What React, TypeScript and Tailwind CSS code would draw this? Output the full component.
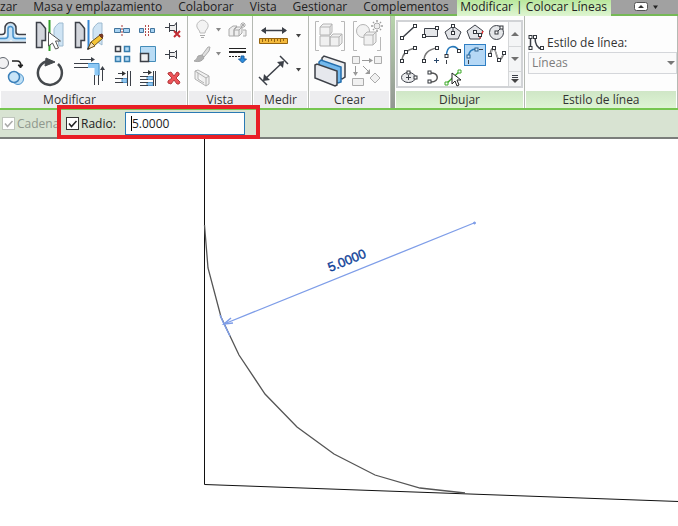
import type { ReactNode } from 'react';

interface IconProps {
  w: number;
  h: number;
  children: ReactNode;
}

function Icon({ w, h, children }: IconProps) {
  return (
    <svg width={w} height={h} viewBox={`0 0 ${w} ${h}`} fill="none" stroke="#3c4048" aria-hidden="true" className="block">
      {children}
    </svg>
  );
}

interface ToolProps {
  label: string;
  children: ReactNode;
  active?: boolean;
}

function Tool({ label, children, active }: ToolProps) {
  return (
    <button
      type="button"
      title={label}
      aria-label={label}
      className={active ? 'block bg-[#b5d8f6] outline outline-[#2f7fc4] -outline-offset-1' : 'block hover:bg-sky-50'}
    >
      {children}
    </button>
  );
}

function DropArrow({ label, faded }: { label: string; faded?: boolean }) {
  return (
    <button type="button" aria-label={label} className="flex items-center justify-center">
      <Icon w={8} h={6}>
        <path d="M2 1h5L4.500 4.500z" fill={faded ? '#888' : '#444'} stroke="none" />
      </Icon>
    </button>
  );
}

interface PanelProps {
  title: string;
  children: ReactNode;
  green?: boolean;
  grow?: boolean;
  titleClass?: string;
}

function Panel({ title, children, green, grow, titleClass = '' }: PanelProps) {
  return (
    <section className={`flex flex-col border-r border-[#b5b9b3] ${grow ? 'min-w-0 flex-1' : 'shrink-0'}`}>
      <div className="h-[75px] bg-[#fdfdfd]">{children}</div>
      <h2
        className={`h-[17px] border-x border-white text-center leading-[17px] ${titleClass} ${
          green ? 'bg-linear-to-b from-[#cfe6c6] to-[#def4d4]' : 'bg-[#ededef]'
        }`}
      >
        {title}
      </h2>
    </section>
  );
}

/* square grips at the ends of sketch lines */
function Grips({ at }: { at: number[][] }) {
  return (
    <>
      {at.map(([x, y]) => (
        <rect key={`${x}-${y}`} x={x - 1.5} y={y - 1.5} width="3" height="3" fill="#fff" stroke="#33373d" />
      ))}
    </>
  );
}

const cursor = 'M0 0v11l3-3 2 5 2-1-2-5h4z';

function ModifyPanel() {
  return (
    <Panel title="Modificar" titleClass="pr-12">
      <div className="flex w-[187px] gap-[3px]">
        <div className="grid grid-cols-[26px_32px_32px] grid-rows-[34px_34px] gap-x-2 pt-[3px]">
          <Tool label="Desfase">
            <Icon w={26} h={34}>
              <path d="M0 20h7q2 0 2-2V9q0-2 2-2t2 2v9q0 2 2 2h11" stroke="#c9e3f6" strokeWidth="5" />
              <path d="M0 15.500h2q3 0 3-3V9a5.500 5.500 0 0 1 11 0v4q0 2.500 3 2.500h7" strokeWidth="1.500" />
              <path d="M0 19.500h5q3 0 3-3V10a2.500 2.500 0 0 1 5 0v6.500q0 3 3 3h10" stroke="#4690c9" strokeWidth="1.500" />
              <path d="M0 23.500h26" strokeWidth="1.500" />
            </Icon>
          </Tool>
          <Tool label="Simetría, seleccionar eje">
            <Icon w={32} h={34}>
              <path d="M2.500 3.500h4q3 3 5 6v12H8v7H2.500z" fill="#d3d6dc" strokeWidth="1.500" />
              <path d="M29 4h-4q-4 3-5 6v10h4l1 7h4z" fill="#cfe4f4" stroke="#9dbad0" />
              <path d="M15.500 1v31" stroke="#35a12c" strokeWidth="2" />
              <path d="M14.500 13v14l4-3 3 6 3-1-3-7h5z" fill="#fff" stroke="#555" />
            </Icon>
          </Tool>
          <Tool label="Simetría, dibujar eje">
            <Icon w={32} h={34}>
              <path d="M1.500 3.500h4q3 3 5 6v12H7v7H1.500z" fill="#d3d6dc" strokeWidth="1.500" />
              <path d="M28 4h-4q-4 3-5 6v10l9 6z" fill="#cfe4f4" stroke="#9dbad0" />
              <path d="M14.500 1v29" stroke="#3687d3" strokeWidth="2" />
              <path d="M14 30l3-7 9-7 3 3-9 8z" fill="#f5c535" stroke="#73551f" />
              <path d="M25 16l3-1 1 2-1 2z" fill="#7c3b24" stroke="#6a301c" />
              <path d="M17 23l4 4-7 3z" fill="#f5dfb4" stroke="#73551f" />
              <path d="M13 31l1-3 2 2z" fill="#333" stroke="none" />
            </Icon>
          </Tool>
          <Tool label="Copiar">
            <Icon w={26} h={34}>
              <circle cx="3" cy="10" r="5.500" fill="#f1f1f3" stroke="#60656d" />
              <path d="M12 8h5q4 0 4 5" stroke="#222" strokeWidth="1.500" />
              <path d="M18 12h5l-2.500 3z" fill="#222" stroke="#222" />
              <circle cx="18" cy="26" r="5.500" fill="#bedff5" stroke="#4d93cb" />
              <circle cx="14" cy="24" r="5.500" fill="#c9e5f8" stroke="#3b80ba" strokeWidth="1.500" />
            </Icon>
          </Tool>
          <Tool label="Rotar">
            <Icon w={32} h={34}>
              <path d="M12 8.500A12 12 0 1 0 24 11" stroke="#45494d" strokeWidth="2.500" />
              <path d="M12 5l9 4-10 4z" fill="#45494d" stroke="#45494d" />
            </Icon>
          </Tool>
          <Tool label="Recortar o alargar en esquina">
            <Icon w={32} h={34}>
              <path d="M14 12.500h8q1 0 1 1v9" stroke="#8ec9f5" strokeWidth="5" />
              <path d="M14 10.500h11v12" stroke="#4a92ca" />
              <path d="M0 10.500h14M0 14.500h14M20.500 22v10M24.500 22v10" />
              <path d="M6 6.500h12M28.500 28V16" />
              <path d="M17 4l4 2.500L17 9zM26 17l2.500-4 2.500 4z" fill="#3c4048" stroke="none" />
            </Icon>
          </Tool>
        </div>
        <div className="grid grid-cols-[26px_26px_26px] grid-rows-[24px_24px_24px] pt-[2px]">
          <Tool label="Dividir elemento">
            <Icon w={26} h={24}>
              <path d="M5.500 10.500h6v4h-6zM14.500 10.500h6v4h-6z" fill="#a7d2f2" stroke="#42759d" />
              <path d="M13 7v11" stroke="#a43838" strokeDasharray="2 1" />
            </Icon>
          </Tool>
          <Tool label="Dividir con separación">
            <Icon w={26} h={24}>
              <path d="M4.500 10.500h4v4h-4zM15.500 10.500h4v4h-4z" fill="#a7d2f2" stroke="#42759d" />
              <path d="M10.500 7v11M13.500 7v11" stroke="#b34a4a" strokeDasharray="2 1" />
            </Icon>
          </Tool>
          <Tool label="Desbloquear">
            <Icon w={26} h={24}>
              <path d="M4 9.500h4M8.500 5v9M8.500 7.500h5l2-3v11l-2-3h-5" fill="#eee" />
              <path d="M13 13l6 6m0-6l-6 6" stroke="#c22c33" strokeWidth="2" />
            </Icon>
          </Tool>
          <Tool label="Matriz">
            <Icon w={26} h={24}>
              <path d="M6.500 4.500h5v5h-5z" fill="#f2f2f2" strokeWidth="1.500" />
              <path d="M15.500 4.500h5v5h-5zM6.500 14.500h5v5h-5zM15.500 14.500h5v5h-5z" fill="#b5daf5" stroke="#397fae" strokeWidth="1.500" />
            </Icon>
          </Tool>
          <Tool label="Escala">
            <Icon w={26} h={24}>
              <path d="M5.500 4.500h15v15h-15z" fill="#b9dcf5" stroke="#448cb9" />
              <path d="M5.500 11.500h8v8h-8z" fill="#f0f0f1" strokeWidth="1.500" />
            </Icon>
          </Tool>
          <Tool label="Bloquear">
            <Icon w={26} h={24}>
              <path d="M4 12.500h4M8.500 8v9M8.500 10.500h5l2-2v8l-2-2h-5" fill="#eee" />
            </Icon>
          </Tool>
          <Tool label="Alargar un elemento">
            <Icon w={26} h={24}>
              <path d="M13 12.500h5v4h-5z" fill="#91c7ef" stroke="#5798cc" />
              <path d="M6 12.500h8M6 16.500h8M18.500 5v15M21.500 5v15M9 7.500h7" />
              <path d="M13 5l4 2.500-4 2.500z" fill="#333" stroke="none" />
            </Icon>
          </Tool>
          <Tool label="Alargar varios elementos">
            <Icon w={26} h={24}>
              <path d="M12 10.500h6v3h-6zM12 16.500h6v3h-6z" fill="#91c7ef" stroke="#5798cc" />
              <path d="M5 10.500h8M5 13.500h8M5 16.500h8M5 19.500h8M18.500 5v15M20.500 5v15M8 6.500h7" />
              <path d="M13 4l4 2.500L13 9z" fill="#333" stroke="none" />
            </Icon>
          </Tool>
          <Tool label="Borrar">
            <Icon w={26} h={24}>
              <path d="M7 7l3-1 3 4 3-4 2 1v2l-3 3 4 4-1 2h-2l-3-4-3 4-3-1v-2l4-3-4-4z" fill="#ed5358" stroke="#b33a3d" />
            </Icon>
          </Tool>
        </div>
      </div>
    </Panel>
  );
}

function ViewPanel() {
  return (
    <Panel title="Vista">
      <div className="grid w-[64px] grid-cols-[24px_8px_28px] grid-rows-[24px_24px_24px] justify-items-end pl-[2px] pt-[2px]">
        <Tool label="Ocultar en vista">
          <Icon w={24} h={24}>
            <path d="M10 15q0-2-2-4a5.500 5.500 0 1 1 9 0q-2 2-2 4z" fill="#f3f3f3" stroke="#bcbcbc" />
            <path d="M10 17.500h5M11 19.500h3" stroke="#aaa" />
          </Icon>
        </Tool>
        <DropArrow label="Opciones de ocultar" faded />
        <Tool label="Caja de selección">
          <Icon w={24} h={24}>
            <path d="M3 11l4-3h4l-3 3v7H3zM8 12l3-3h5v6l-3 3H8zM8 12h5v6M13 12l3-3M17 12h3v6h-3" fill="#eee" stroke="#aaa" />
            <path d="M14 7h6M17 4v6M15 5l4 4M19 5l-4 4" stroke="#aaa" />
          </Icon>
        </Tool>
        <Tool label="Modificar gráficos">
          <Icon w={24} h={24}>
            <path d="M4 19q3-1 4-5l4-1 2 3q-3 5-10 3z" fill="#b2b2b2" stroke="#a5a5a5" />
            <path d="M12 13l6-8h2l-1 4-5 6z" fill="#e0e0e0" stroke="#aaa" />
          </Icon>
        </Tool>
        <DropArrow label="Opciones de gráficos" faded />
        <Tool label="Estilo de línea de trabajo">
          <Icon w={24} h={24}>
            <path d="M3 6.500h17" stroke="#222" />
            <path d="M3 10h17" stroke="#222" strokeWidth="2" />
            <path d="M3 14.500h13" stroke="#222" strokeDasharray="2 1" />
            <path d="M15 14h3v3h2.500l-4 4-4-4H15z" fill="#2c8ddd" stroke="#1b5d9e" />
          </Icon>
        </Tool>
        <Tool label="Sección">
          <Icon w={24} h={24}>
            <path d="M5 5l3-1 11 6v8l-3 2-11-7zM5 5l11 7v8M16 12l3-2M8 7v6l6 4" fill="#f1f1f1" stroke="#b0b0b0" />
          </Icon>
        </Tool>
      </div>
    </Panel>
  );
}

function MeasurePanel() {
  return (
    <Panel title="Medir">
      <div className="grid w-[55px] grid-cols-[32px_8px] grid-rows-[34px_34px] gap-x-[5px] pl-1 pt-[3px]">
        <Tool label="Medir distancia">
          <Icon w={32} h={34}>
            <path d="M5 11.500h24" strokeWidth="1.500" />
            <path d="M9 8v7l-5-3.500zM25 8v7l5-3.500z" fill="#3c4048" stroke="none" />
            <path d="M2.500 19.500h28v5h-28z" fill="#f3b93c" stroke="#96640f" />
            <path d="M5.500 20v3M8.500 20v2M11.500 20v3M14.500 20v2M17.500 20v3M20.500 20v2M23.500 20v3M26.500 20v2" stroke="#96640f" />
          </Icon>
        </Tool>
        <DropArrow label="Opciones de distancia" />
        <Tool label="Cota alineada">
          <Icon w={32} h={34}>
            <path d="M7 27L26 9" strokeWidth="1.500" />
            <path d="M6 28l1-7 6 6zM27 8l-7 1 6 6z" fill="#3c4048" stroke="none" />
            <path d="M2 24l8 8M23 3l8 8" strokeWidth="1.500" />
          </Icon>
        </Tool>
        <DropArrow label="Opciones de cota" />
      </div>
    </Panel>
  );
}

function CreatePanel() {
  return (
    <Panel title="Crear">
      <div className="grid w-[81px] grid-cols-[34px_34px] grid-rows-[34px_34px] gap-x-1 pl-[5px] pt-[3px]">
        <Tool label="Crear grupo">
          <Icon w={34} h={34}>
            <path d="M5 2.500H1.500v29H5M27 2.500h3.500v29H27" stroke="#b8b8b8" />
            <path d="M6 8l3-3h9v8l-2 3H6zM6 8h10v8M16 8l2-3" fill="#f2f2f2" stroke="#b4b4b4" />
            <path d="M6 17h10v10H6zM16 18l3-3h9v9l-3 3h-9zM16 18h9v9M25 18l3-3" fill="#f0f0f0" stroke="#b4b4b4" />
          </Icon>
        </Tool>
        <Tool label="Crear similar">
          <Icon w={34} h={34}>
            <path d="M5 2.500H1.500v29H5M25 31.500h3.500V18" stroke="#b8b8b8" />
            <circle cx="11" cy="12" r="6.500" fill="#f2f2f2" stroke="#b4b4b4" />
            <path d="M12 16l3-3h9v10l-3 3h-9zM12 16h9v10M21 16l3-3" fill="#f0f0f0" stroke="#b4b4b4" />
            <circle cx="25" cy="7" r="3" fill="#eee" stroke="#a8a8a8" />
            <path d="M25 1v2M25 11v2M19 7h2M29 7h2M21 3l1 1M28 10l1 1M29 3l-1 1M22 10l-1 1" stroke="#a0a0a0" strokeWidth="1.500" />
          </Icon>
        </Tool>
        <Tool label="Crear montaje">
          <Icon w={34} h={34}>
            <path d="M8 5l2-2 21 7v14l-3 2-20-8z" fill="#eceef0" strokeWidth="1.500" />
            <path d="M5 9l2-2 20 7v15l-3 1-19-8z" fill="#73b9ed" stroke="#236ead" strokeWidth="1.500" />
            <path d="M1 12l2-1 20 7v14l-2 1L1 25z" fill="#e6e8ed" strokeWidth="1.500" />
          </Icon>
        </Tool>
        <Tool label="Crear piezas">
          <Icon w={34} h={34}>
            <path d="M.5 3.500h7v7h-7zM22.500 3.500h7v7h-7zM.5 25.500h11v7H.5zM23 20l5 5-5 5-5-5z" fill="#f1f1f1" stroke="#acacac" />
            <path d="M10 7.500h9M3.500 13v8M11 13l6 6" stroke="#999" />
            <path d="M17 5v5l4-2.500zM1 19h5l-2.500 4zM18 16v5h-5z" fill="#999" stroke="none" />
          </Icon>
        </Tool>
      </div>
    </Panel>
  );
}

function DrawPanel() {
  return (
    <Panel title="Dibujar" green>
      <div className="w-[129px] pl-px pt-1">
        <div className="flex h-[68px] w-[127px] border-2 border-[#d1d3d6] bg-white">
          <div className="grid grid-cols-[22px_22px_22px_22px_22px] grid-rows-[22px_22px_22px]">
            <Tool label="Línea">
              <Icon w={22} h={22}>
                <path d="M4 16L17 4" strokeWidth="1.500" />
                <Grips at={[[4, 16], [17, 4]]} />
              </Icon>
            </Tool>
            <Tool label="Rectángulo">
              <Icon w={22} h={22}>
                <path d="M4.500 6.500h13v8h-13z" fill="#e5e7ea" />
                <Grips at={[[4, 14], [17, 6]]} />
              </Icon>
            </Tool>
            <Tool label="Polígono inscrito">
              <Icon w={22} h={22}>
                <path d="M11 4l8 6-3 7H6l-3-7z" fill="#e2e4e8" />
                <path d="M11 5v6" />
                <Grips at={[[11, 4], [11, 11]]} />
              </Icon>
            </Tool>
            <Tool label="Polígono circunscrito">
              <Icon w={22} h={22}>
                <path d="M11 3l8 6-3 8H6L3 9z" fill="#e2e4e8" />
                <path d="M11 10l5 3" />
                <path d="M19 9l-4 9" stroke="#e33232" strokeWidth="1.500" strokeDasharray="3 2" />
                <Grips at={[[11, 10], [16, 13]]} />
              </Icon>
            </Tool>
            <Tool label="Círculo">
              <Icon w={22} h={22}>
                <circle cx="10.500" cy="10.500" r="7" fill="#e5e7ea" />
                <path d="M11 10l4-4" />
                <Grips at={[[10.500, 10.500], [15.500, 5.500]]} />
              </Icon>
            </Tool>
            <Tool label="Arco por tres puntos">
              <Icon w={22} h={22}>
                <path d="M4 17q0-10 13-13" stroke="#777" strokeWidth="1.500" />
                <Grips at={[[4, 17], [8, 8], [17, 4]]} />
              </Icon>
            </Tool>
            <Tool label="Arco por centro y extremos">
              <Icon w={22} h={22}>
                <path d="M4 17q0-11 13-13" stroke="#777" strokeWidth="1.500" />
                <path d="M14 16.500h5M16.500 14v5" stroke="#29476a" />
                <Grips at={[[4, 17], [17, 4]]} />
              </Icon>
            </Tool>
            <Tool label="Arco tangente">
              <Icon w={22} h={22}>
                <path d="M4.500 12C4.500 0 14 1 17 7" stroke="#2779ba" strokeWidth="1.500" />
                <path d="M4.500 16v4" />
                <Grips at={[[4.500, 12], [17, 7]]} />
              </Icon>
            </Tool>
            <Tool label="Arco de empalme" active>
              <Icon w={22} h={22}>
                <path d="M4.500 13q0-8 8-8" stroke="#2779ba" strokeWidth="1.500" />
                <path d="M4.500 16v4M15 5.500h4" />
                <rect x="3" y="11" width="3" height="3" fill="#d9ecfb" stroke="#2a5f8e" />
                <rect x="11" y="4" width="3" height="3" fill="#d9ecfb" stroke="#2a5f8e" />
              </Icon>
            </Tool>
            <Tool label="Spline">
              <Icon w={22} h={22}>
                <path d="M4 11C5 2 8 3 10 9c2 9 5 9 8 0" stroke="#777" strokeWidth="1.500" />
                <path d="M4 11l4-7 5 12 5-7" stroke="#aaa" />
                <Grips at={[[4, 11], [8, 4], [13, 16], [18, 9]]} />
              </Icon>
            </Tool>
            <Tool label="Elipse">
              <Icon w={22} h={22}>
                <ellipse cx="10.500" cy="11.500" rx="7" ry="5" fill="#e9eaec" />
                <path d="M8 11.500h5M10.500 9v5" />
                <Grips at={[[17.500, 11.500], [10.500, 6.500]]} />
              </Icon>
            </Tool>
            <Tool label="Elipse parcial">
              <Icon w={22} h={22}>
                <path d="M10 7c9-1 10 9 1 9" stroke="#555" strokeWidth="1.500" />
                <Grips at={[[9.500, 6.500], [9.500, 15.500]]} />
              </Icon>
            </Tool>
            <Tool label="Seleccionar líneas">
              <Icon w={22} h={22}>
                <path d="M4.500 17.500l13-12" stroke="#3eaa2b" strokeWidth="1.500" />
                <path d="M3 16h3v3H3zM16 4h3v3h-3z" fill="#fff" stroke="#3eaa2b" />
                <path d={cursor} transform="translate(10 7)" fill="#fff" stroke="#222" />
              </Icon>
            </Tool>
          </div>
          <div className="flex flex-1 flex-col border-l border-[#d5d7d9] bg-[#f4f5f6]">
            <button type="button" aria-label="Subir" className="flex flex-1 items-center justify-center border-b border-[#d5d7d9]">
              <Icon w={8} h={6}><path d="M0 5h8L4 1z" fill="#707070" stroke="none" /></Icon>
            </button>
            <button type="button" aria-label="Bajar" className="flex flex-1 items-center justify-center border-b border-[#d5d7d9]">
              <Icon w={8} h={6}><path d="M0 1h8L4 5z" fill="#707070" stroke="none" /></Icon>
            </button>
            <button type="button" aria-label="Más" className="flex h-[14px] items-center justify-center">
              <Icon w={8} h={8}><path d="M1 .5h6M1 2.500h6" /><path d="M0 4h8L4 8z" fill="#444" stroke="none" /></Icon>
            </button>
          </div>
        </div>
      </div>
    </Panel>
  );
}

function LineStylePanel() {
  return (
    <Panel title="Estilo de línea" green grow>
      <div className="pl-[3px] pt-[17px]">
        <label htmlFor="line-style" className="flex h-[19px] items-center gap-[3px]">
          <Icon w={16} h={16}>
            <path d="M2.500 2v12M7 2q0 11 7 12" strokeWidth="1.500" />
            <Grips at={[[2.500, 2], [2.500, 13], [7, 2], [14, 13]]} />
          </Icon>
          Estilo de línea:
        </label>
        <div className="relative">
          <select
            id="line-style"
            disabled
            className="block h-[22px] w-full appearance-none border border-[#d4d6da] bg-[#fafafa] pl-[3px] leading-5 text-[#7c7c7c] opacity-100"
          >
            <option>Líneas</option>
          </select>
          <span className="pointer-events-none absolute right-[2px] top-2">
            <Icon w={8} h={6}><path d="M0 1h8L4 5z" fill="#777" stroke="none" /></Icon>
          </span>
        </div>
      </div>
    </Panel>
  );
}

function Check({ id, label, disabled }: { id: string; label: string; disabled?: boolean }) {
  return (
    <label htmlFor={id} className={`flex items-center gap-[2px] ${disabled ? 'text-[#8f978d]' : 'text-[#222]'}`}>
      <span className="relative">
        <input
          id={id}
          type="checkbox"
          defaultChecked
          disabled={disabled}
          className="peer block size-[13px] appearance-none border border-[#333] bg-white disabled:border-[#bfc5bd]"
        />
        <svg
          viewBox="0 0 13 13"
          className="pointer-events-none absolute inset-0 hidden size-[13px] peer-checked:block"
          fill="none"
          stroke={disabled ? '#aaa' : '#222'}
          strokeWidth="1.500"
        >
          <path d="M3 6.500l2.500 3L10.500 4" />
        </svg>
      </span>
      {label}
    </label>
  );
}

function OptionsBar() {
  return (
    <div className="flex h-[29px] items-center border-b-2 border-[#7b7e7b] bg-[#d8e3d2] pl-[2px]">
      <div className="w-16 shrink-0">
        <Check id="chain" label="Cadena" disabled />
      </div>
      <div className="relative flex items-center">
        <div className="w-[59px]">
          <Check id="radius-on" label="Radio:" />
        </div>
        <div className="flex h-[23px] w-[120px] items-center border border-[#2a7ab5] bg-white pl-[5px]">
          <span className="h-[15px] w-px bg-black" />
          <input aria-label="Radio" defaultValue="5.0000" className="w-full min-w-0 leading-5 text-[#222] outline-none" />
        </div>
        <div className="pointer-events-none absolute -bottom-[4px] -left-[9px] -right-[15px] -top-[7px] border-4 border-[#e81e25]" />
      </div>
    </div>
  );
}

function DrawingArea() {
  return (
    <svg className="block h-[387px] w-full bg-white" fill="none" role="img" aria-label="Empalme de radio 5.0000">
      <path d="M204.500 0v345.500l1422 51" stroke="#111" />
      <path
        d="M204.500 86L208 129l13 49 18 38 26 39 32 33 37 27 41 21 45 13 45 5"
        stroke="#555"
        strokeWidth="1.300"
      />
      <g stroke="#7e9de8">
        <path d="M474 84L224 185" strokeWidth="1.300" />
        <path d="M220 176l4 9 6 12" strokeWidth="1.500" />
        <path d="M231 179l-7 6 9-1" strokeWidth="1.500" />
        <circle cx="474.500" cy="84" r="1" fill="#7e9de8" />
      </g>
      <text
        x="330"
        y="133"
        transform="rotate(-22 330 133)"
        fill="#0f3f98"
        stroke="#0f3f98"
        strokeWidth=".4"
        className="font-['Liberation_Sans',sans-serif] text-[13px]"
      >
        5.0000
      </text>
    </svg>
  );
}

const tabs = ['zar', 'Masa y emplazamiento', 'Colaborar', 'Vista', 'Gestionar', 'Complementos'];

export default function App() {
  return (
    <div className="bg-white font-['Open_Sans','Noto_Sans',sans-serif] text-[12px] text-[#333]">
      <nav className="flex h-4 border-b-2 border-[#76b956] bg-[#a1a1a1] text-[#222] leading-[14px]">
        <div className="flex shrink-0 gap-4">
          {tabs.map((tab) => (
            <button key={tab} type="button" className="h-[14px] whitespace-nowrap">
              {tab}
            </button>
          ))}
        </div>
        <button type="button" className="ml-2 h-4 w-[154px] shrink-0 whitespace-nowrap bg-linear-to-b from-[#b9e89d] to-[#dff5d2] pb-[2px]">
          Modificar | Colocar Líneas
        </button>
        <button type="button" aria-label="Minimizar cinta" className="ml-[22px]">
          <Icon w={26} h={13}>
            <rect x="1.500" y="1.500" width="13" height="8" rx="2" fill="#fff" stroke="#555" />
            <path d="M5 7h6L8 4z" fill="#333" stroke="none" />
            <path d="M20 4.500h5L22.500 8z" fill="#222" stroke="none" />
          </Icon>
        </button>
      </nav>
      <div className="flex border-b-2 border-[#76c650]">
        <ModifyPanel />
        <ViewPanel />
        <MeasurePanel />
        <CreatePanel />
        <div className="w-1 shrink-0 bg-linear-to-b from-[#b8d5ad] to-[#929692]" />
        <DrawPanel />
        <LineStylePanel />
      </div>
      <OptionsBar />
      <DrawingArea />
    </div>
  );
}
